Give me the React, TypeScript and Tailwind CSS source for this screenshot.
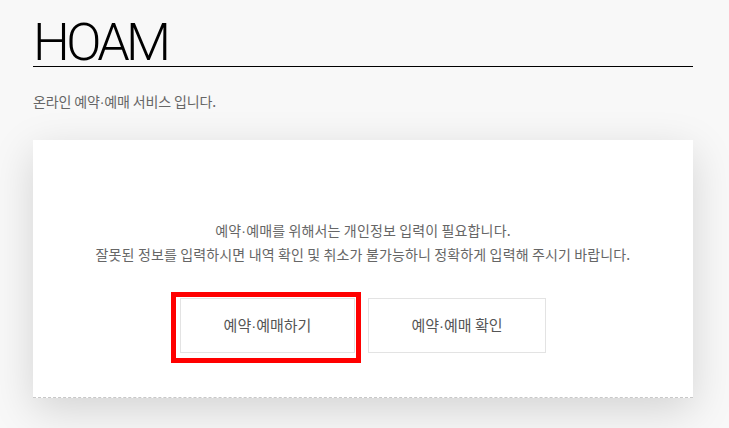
import React from 'react'

const font = { fontFamily: '"Noto Sans CJK KR", "Noto Sans", sans-serif' }

const Dot = () => <span style={{ fontFamily: '"Liberation Sans", sans-serif' }}>·</span>

export default function App() {
  return (
    <div className="min-h-[428px] w-full bg-[#f8f8f8] overflow-hidden" style={font}>
      <div className="ml-[33px] w-[660px] pt-[20px]">
        <h1
          className="border-b border-black text-[52px] leading-[46px] font-light tracking-[-0.07em] text-black"
          style={{ fontFamily: 'Roboto, "Noto Sans", sans-serif' }}
        >
          HOAM
        </h1>
        <p className="mt-[25px] text-[14px] leading-[18px] tracking-[-0.01em] text-[#666]">
          온라인 예약<Dot />예매 서비스 입니다.
        </p>

        <div className="mt-[29px] h-[258px] bg-white shadow-[0_12px_40px_rgba(0,0,0,0.15)] border-b border-dashed border-[#c8c8c8]">
          <div className="pt-[79px] text-center text-[14px] leading-[23px] tracking-[0.01em] text-[#666]">
            <p>예약<Dot />예매를 위해서는 개인정보 입력이 필요합니다.</p>
            <p>잘못된 정보를 입력하시면 내역 확인 및 취소가 불가능하니 정확하게 입력해 주시기 바랍니다.</p>
          </div>
          <div className="mt-[32px] flex justify-center gap-[13px]">
            <div className="relative">
              <button className="w-[175px] h-[55px] border border-[#e3e3e3] bg-white text-[15px] text-[#555]">
                예약<Dot />예매하기
              </button>
              <div className="absolute left-[-9px] top-[-6px] w-[190px] h-[71px] border-[5px] border-[#ff0000] pointer-events-none" />
            </div>
            <button className="w-[178px] h-[55px] border border-[#e3e3e3] bg-white text-[15px] text-[#555]">
              예약<Dot />예매 확인
            </button>
          </div>
        </div>
      </div>
    </div>
  )
}
